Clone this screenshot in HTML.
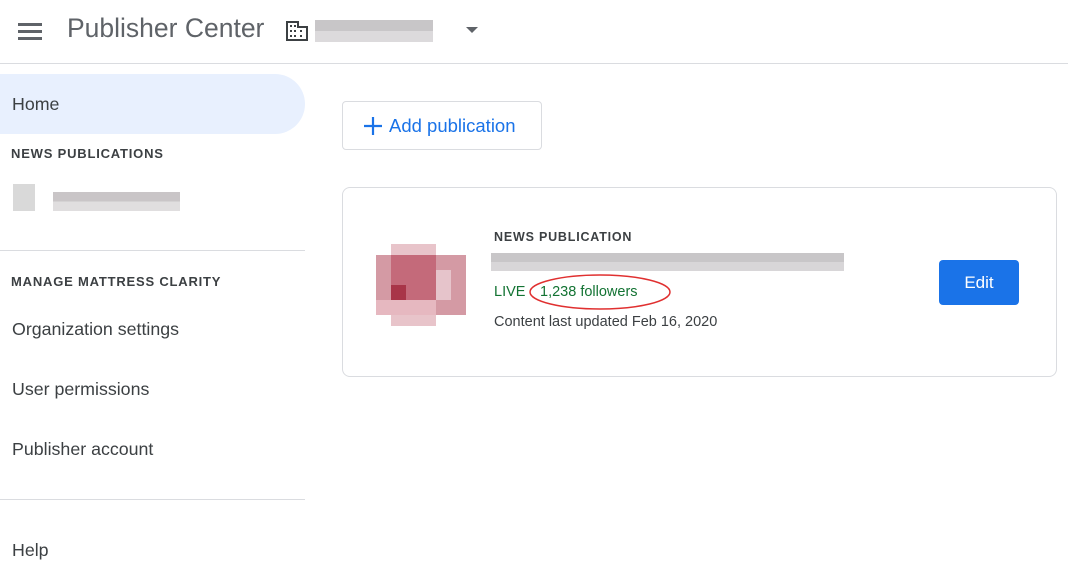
<!DOCTYPE html>
<html><head><style>
body{margin:0;width:1068px;height:562px;background:#fff;font-family:"Liberation Sans",Arial,sans-serif;position:relative;overflow:hidden;color:#3c4043}
.a{position:absolute}
.cap{font-size:13px;letter-spacing:0.8px;font-weight:bold;color:#3c4043}
.nav{font-size:17.8px;color:#3c4043}
</style></head><body>
<div class="a" style="left:18px;top:23px;width:24px;height:3px;background:#5f6368;box-shadow:0 7px 0 #5f6368,0 14px 0 #5f6368"></div>
<div class="a" style="left:67px;top:13px;font-size:26.5px;color:#5f6368">Publisher Center</div>
<svg class="a" style="left:286px;top:21px" width="22" height="20" viewBox="0 0 22 20"><path d="M1 19V1h11v5h9v13z" fill="none" stroke="#3c4043" stroke-width="2"/><rect x="4" y="4" width="2" height="2" fill="#3c4043"/><rect x="8" y="4" width="2" height="2" fill="#3c4043"/><rect x="4" y="9" width="2" height="2" fill="#3c4043"/><rect x="8" y="9" width="2" height="2" fill="#3c4043"/><rect x="4" y="14" width="2" height="2" fill="#3c4043"/><rect x="8" y="14" width="2" height="2" fill="#3c4043"/><rect x="14" y="9" width="2" height="2" fill="#3c4043"/><rect x="14" y="14" width="2" height="2" fill="#3c4043"/></svg>
<div class="a" style="left:315px;top:20px;width:118px;height:22px;background:linear-gradient(#c8c6c8 50%,#dcdadc 50%)"></div>
<div class="a" style="left:466px;top:27px;width:0;height:0;border-left:6px solid transparent;border-right:6px solid transparent;border-top:6px solid #5f6368"></div>
<div class="a" style="left:0;top:63px;width:1068px;height:1px;background:#dadce0"></div>
<div class="a" style="left:0;top:74px;width:305px;height:60px;background:#e8f0fe;border-radius:0 30px 30px 0"></div>
<div class="a nav" style="left:12px;top:94px">Home</div>
<div class="a cap" style="left:11px;top:146px">NEWS PUBLICATIONS</div>
<div class="a" style="left:13px;top:184px;width:22px;height:27px;background:#c9c9c9;opacity:.7"></div>
<div class="a" style="left:53px;top:192px;width:127px;height:19px;background:linear-gradient(#c9c5c7 50%,#e0dedf 50%)"></div>
<div class="a" style="left:0;top:250px;width:305px;height:1px;background:#dadce0"></div>
<div class="a cap" style="left:11px;top:274px">MANAGE MATTRESS CLARITY</div>
<div class="a nav" style="left:12px;top:319px">Organization settings</div>
<div class="a nav" style="left:12px;top:379px">User permissions</div>
<div class="a nav" style="left:12px;top:439px">Publisher account</div>
<div class="a" style="left:0;top:499px;width:305px;height:1px;background:#dadce0"></div>
<div class="a nav" style="left:12px;top:540px">Help</div>
<div class="a" style="left:342px;top:101px;width:198px;height:47px;border:1px solid #dadce0;border-radius:4px"></div>
<svg class="a" style="left:363px;top:116px" width="20" height="20"><path d="M10 1v18M1 10h18" stroke="#1a73e8" stroke-width="2.2"/></svg>
<div class="a" style="left:389px;top:115px;font-size:18.5px;color:#1a73e8">Add publication</div>
<div class="a" style="left:342px;top:187px;width:713px;height:188px;border:1px solid #dadce0;border-radius:8px"></div>
<svg class="a" style="left:376px;top:244px" width="90" height="82">
<rect x="15" y="0" width="45" height="82" fill="#e8c4ca"/><rect x="0" y="11" width="90" height="60" fill="#d49aa4"/>
<rect x="15" y="11" width="45" height="45" fill="#c46a7a"/><rect x="15" y="41" width="15" height="15" fill="#a83548"/>
<rect x="60" y="26" width="15" height="30" fill="#e6c4cb"/><rect x="0" y="56" width="60" height="15" fill="#e6b8c0"/></svg>
<div class="a cap" style="left:494px;top:230px;font-size:12.5px">NEWS PUBLICATION</div>
<div class="a" style="left:491px;top:253px;width:353px;height:18px;background:linear-gradient(#c8c6c8 50%,#d8d6d8 50%)"></div>
<div class="a" style="left:494px;top:284px;font-size:14.5px;color:#137333">LIVE</div>
<div class="a" style="left:540px;top:284px;font-size:14.5px;color:#137333">1,238 followers</div>
<svg class="a" style="left:528px;top:272px" width="145" height="40"><ellipse cx="72" cy="20" rx="70" ry="17" fill="none" stroke="#e03030" stroke-width="1.5"/></svg>
<div class="a" style="left:494px;top:314px;font-size:14.5px;color:#3c4043">Content last updated Feb 16, 2020</div>
<div class="a" style="left:939px;top:260px;width:80px;height:45px;background:#1a73e8;border-radius:4px;color:#fff;font-size:17px;text-align:center;line-height:45px">Edit</div>
</body></html>
